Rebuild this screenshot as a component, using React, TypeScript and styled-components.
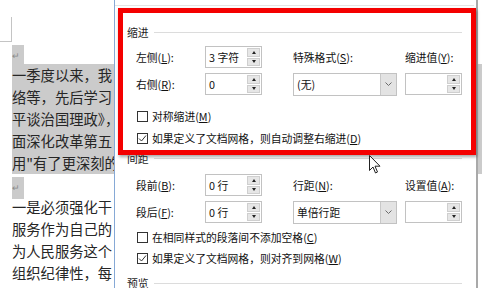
import React from 'react';
import styled, { createGlobalStyle } from 'styled-components';

const GlobalStyle = createGlobalStyle`
  html, body { margin: 0; padding: 0; background: #fff; overflow: hidden; }
  #root { width: 482px; height: 288px; }
`;

const Screen = styled.div`
  position: relative;
  display: flex;
  width: 482px;
  height: 288px;
  overflow: hidden;
  background: #fff;
  font-family: "Noto Sans CJK SC", "Noto Sans", sans-serif;
`;

/* ---------- document behind the dialog ---------- */
const DocPane = styled.div`
  flex: none;
  width: 114px;
  overflow: hidden;
  padding-top: 17px;
`;

const CornerMark = styled.div`
  width: 12px;
  height: 25px;
  box-sizing: border-box;
  border-right: 1px solid #c4c4c4;
  border-bottom: 1px solid #c4c4c4;
`;

const Lines = styled.div`
  margin-left: 12px;
`;

const Line = styled.div<{ $sel?: boolean }>`
  height: 22px;
  line-height: 22px;
  font-size: 14.3px;
  color: #262626;
  white-space: nowrap;
  background: ${(p) => (p.$sel ? '#cbcbcb' : 'transparent')};
`;

const Mark = styled.span<{ $sel?: boolean }>`
  display: inline-block;
  width: 12px;
  height: 22px;
  font-size: 9px;
  color: #8a8a8a;
  line-height: 22px;
  background: ${(p) => (p.$sel ? '#cbcbcb' : 'transparent')};
`;

const EdgeStrip = styled.div`
  flex: 1;
  padding-top: 64px;
  &::before {
    content: '';
    display: block;
    height: 110px;
    background: #cbcbcb;
  }
`;

/* ---------- dialog ---------- */
const Dialog = styled.div`
  flex: none;
  width: 364px;
  height: 288px;
  box-sizing: border-box;
  background: #fff;
  border-left: 1px solid #86a9d6;
  border-right: 2px solid #a9a9a9;
  padding: 0 14px 0 12px;
  color: #111;
  font-size: 10.8px;
`;

const TopRule = styled.div`
  margin: 5px -12px 0 -12px;
  border-top: 1px solid #e4e4e4;
`;

const Legend = styled.div<{ $mt: number }>`
  display: flex;
  align-items: center;
  gap: 5px;
  height: 14px;
  margin-top: ${(p) => p.$mt}px;
  color: #1e1e1e;
  &::after {
    content: '';
    flex: 1;
    border-top: 1px solid #dcdcdc;
  }
`;

const FieldGrid = styled.div<{ $mt: number }>`
  display: grid;
  grid-template-columns: 69px 57px 31px 104px 8px 57px;
  grid-template-rows: 22px 22px;
  row-gap: 5px;
  margin: ${(p) => p.$mt}px 0 0 9px;
  align-items: center;
`;

const Label = styled.div<{ $col: number }>`
  grid-column: ${(p) => p.$col};
  white-space: nowrap;
`;

const SpinBox = styled.div<{ $col: number }>`
  grid-column: ${(p) => p.$col};
  display: flex;
  height: 22px;
  box-sizing: border-box;
  border: 1px solid #c2c2c2;
  background: #fff;
`;

const SpinText = styled.div`
  flex: 1;
  padding-left: 3px;
  line-height: 20px;
  white-space: nowrap;
`;

const SpinCol = styled.div`
  width: 13px;
  display: flex;
  flex-direction: column;
  gap: 1px;
  padding: 1px;
`;

const SpinBtn = styled.div<{ $down?: boolean }>`
  flex: 1;
  background: #e6e6e6;
  border: 1px solid #cfcfcf;
  display: flex;
  align-items: center;
  justify-content: center;
  &::before {
    content: '';
    border-left: 2.5px solid transparent;
    border-right: 2.5px solid transparent;
    ${(p) => (p.$down ? 'border-top: 3px solid #222;' : 'border-bottom: 3px solid #222;')}
  }
`;

const Select = styled.div<{ $col: number }>`
  grid-column: ${(p) => p.$col};
  display: flex;
  height: 23px;
  box-sizing: border-box;
  border: 1px solid #c2c2c2;
  background: #fff;
`;

const SelectText = styled.div`
  flex: 1;
  padding-left: 3px;
  line-height: 21px;
  white-space: nowrap;
`;

const DropBtn = styled.div`
  width: 15px;
  background: #e3e3e3;
  border-left: 1px solid #c8c8c8;
  display: flex;
  align-items: center;
  justify-content: center;
`;

const CheckRow = styled.div<{ $mt: number }>`
  display: flex;
  align-items: center;
  gap: 4px;
  height: 16px;
  margin: ${(p) => p.$mt}px 0 0 10px;
  white-space: nowrap;
`;

const Box = styled.div`
  width: 11px;
  height: 11px;
  box-sizing: border-box;
  border: 1px solid #333;
  background: #fff;
  display: flex;
  align-items: center;
  justify-content: center;
`;

const Highlight = styled.div`
  position: absolute;
  left: 118px;
  top: 8px;
  width: 358px;
  height: 147px;
  box-sizing: border-box;
  border: 5px solid #f40000;
  box-shadow: 1px 2px 3px rgba(0, 0, 0, 0.35);
  pointer-events: none;
`;

const Cursor = styled.svg`
  position: absolute;
  left: 369px;
  top: 155px;
`;

const Spin = ({ col, text }: { col: number; text?: string }) => (
  <SpinBox $col={col}>
    <SpinText>{text}</SpinText>
    <SpinCol>
      <SpinBtn />
      <SpinBtn $down />
    </SpinCol>
  </SpinBox>
);

const Drop = ({ col, text }: { col: number; text: string }) => (
  <Select $col={col}>
    <SelectText>{text}</SelectText>
    <DropBtn>
      <svg width="7" height="4" viewBox="0 0 7 4">
        <path d="M0.5 0.5 L3.5 3.5 L6.5 0.5" fill="none" stroke="#6b6b6b" strokeWidth="1" />
      </svg>
    </DropBtn>
  </Select>
);

const Check = ({ mt, checked, children }: { mt: number; checked?: boolean; children: React.ReactNode }) => (
  <CheckRow $mt={mt}>
    <Box>
      {checked && (
        <svg width="9" height="9" viewBox="0 0 9 9">
          <path d="M1 4.5 L3.5 7 L8 1.5" fill="none" stroke="#333" strokeWidth="1" />
        </svg>
      )}
    </Box>
    <span>{children}</span>
  </CheckRow>
);

const docSel = ['一季度以来，我', '络等，先后学习', '平谈治国理政》，', '面深化改革第五', '用"有了更深刻的'];
const docRest = ['一是必须强化干', '服务作为自己的', '为人民服务这个', '组织纪律性，每', '的，必须坚持以'];

export default function App() {
  return (
    <Screen>
      <GlobalStyle />
      <DocPane>
        <CornerMark />
        <Lines>
          <Line><Mark $sel>↵</Mark></Line>
          {docSel.map((t) => (
            <Line key={t} $sel>{t}</Line>
          ))}
          <Line><Mark $sel>↵</Mark></Line>
          {docRest.map((t) => (
            <Line key={t}>{t}</Line>
          ))}
        </Lines>
      </DocPane>

      <Dialog>
        <TopRule />
        <Legend $mt={19}>缩进</Legend>
        <FieldGrid $mt={7}>
          <Label $col={1}>左侧(<u>L</u>):</Label>
          <Spin col={2} text="3 字符" />
          <Label $col={4}>特殊格式(<u>S</u>):</Label>
          <Label $col={6}>缩进值(<u>Y</u>):</Label>
          <Label $col={1}>右侧(<u>R</u>):</Label>
          <Spin col={2} text="0" />
          <Drop col={4} text="(无)" />
          <Spin col={6} />
        </FieldGrid>
        <Check mt={13}>对称缩进(<u>M</u>)</Check>
        <Check mt={6} checked>如果定义了文档网格，则自动调整右缩进(<u>D</u>)</Check>
        <Legend $mt={5}>间距</Legend>
        <FieldGrid $mt={9}>
          <Label $col={1}>段前(<u>B</u>):</Label>
          <Spin col={2} text="0 行" />
          <Label $col={4}>行距(<u>N</u>):</Label>
          <Label $col={6}>设置值(<u>A</u>):</Label>
          <Label $col={1}>段后(<u>F</u>):</Label>
          <Spin col={2} text="0 行" />
          <Drop col={4} text="单倍行距" />
          <Spin col={6} />
        </FieldGrid>
        <Check mt={6}>在相同样式的段落间不添加空格(<u>C</u>)</Check>
        <Check mt={5} checked>如果定义了文档网格，则对齐到网格(<u>W</u>)</Check>
        <Legend $mt={10}>预览</Legend>
      </Dialog>

      <EdgeStrip />

      <Highlight />
      <Cursor width="12" height="19" viewBox="0 0 12 19">
        <path d="M0.5 0.5 L0.5 15.5 L4 12 L6.5 18 L8.5 17 L6 11.2 L11 11.2 Z" fill="#fff" stroke="#222" strokeWidth="1" strokeLinejoin="round" />
      </Cursor>
    </Screen>
  );
}
